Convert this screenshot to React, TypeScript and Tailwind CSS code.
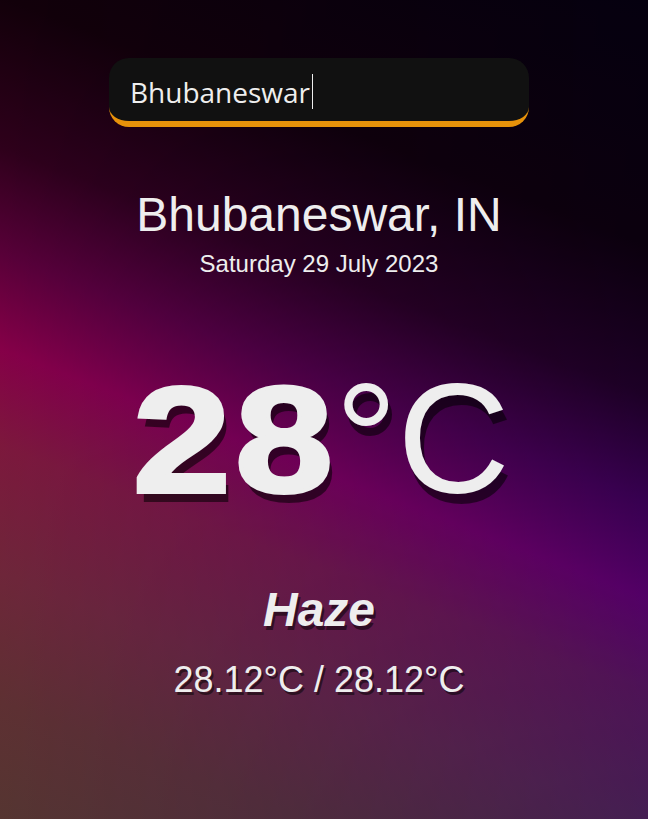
export default function App() {
  return (
    <div className="min-h-screen w-full flex flex-col items-center pr-[10px] pt-[58px] text-[#eeeeee] font-['Liberation_Sans',Arial,sans-serif] bg-[linear-gradient(to_right,rgb(255,255,179),rgb(158,204,255)),linear-gradient(201deg,rgb(8,0,15)_0%,rgb(18,0,14)_23%,rgb(46,0,38)_37%,rgb(88,0,80)_47%,rgb(133,0,102)_56%,rgb(124,24,86)_65%,rgb(110,38,82)_77%,rgb(94,48,72)_89%,rgb(85,53,70)_100%)] [background-blend-mode:multiply]">
      <div className="w-[420px] h-[69px] rounded-[20px] bg-[#111111] border-b-[6px] border-[#e6920a] flex items-center pl-[21px] pt-[4px] font-['Open_Sans',sans-serif] text-[28px] text-[#eeeeee]">
        <span className="leading-[38px]">Bhubaneswar</span>
        <span className="w-px h-[35px] bg-[#eeeeee] ml-[2px]" />
      </div>

      <div className="mt-[64px] text-[48px] leading-none">Bhubaneswar, IN</div>
      <div className="mt-[13px] text-[24px] leading-none">Saturday 29 July 2023</div>

      <div className="mt-[84px] flex items-baseline [text-shadow:4px_10px_0_rgba(0,0,0,0.55)]">
        <div className="w-[207px]">
          <span className="inline-block ml-[5px] origin-left scale-x-[1.17] text-[150px] leading-none font-bold tracking-[4px] [-webkit-text-stroke:4px_#eeeeee]">
            28
          </span>
        </div>
        <span className="text-[156px] leading-none font-normal">°C</span>
      </div>

      <div className="mt-[70px] text-[48px] leading-none font-bold italic [text-shadow:2px_4px_0_rgba(0,0,0,0.5)]">
        Haze
      </div>
      <div className="mt-[28px] text-[36px] leading-none [text-shadow:2px_3px_0_rgba(0,0,0,0.5)]">
        28.12°C / 28.12°C
      </div>
    </div>
  );
}
